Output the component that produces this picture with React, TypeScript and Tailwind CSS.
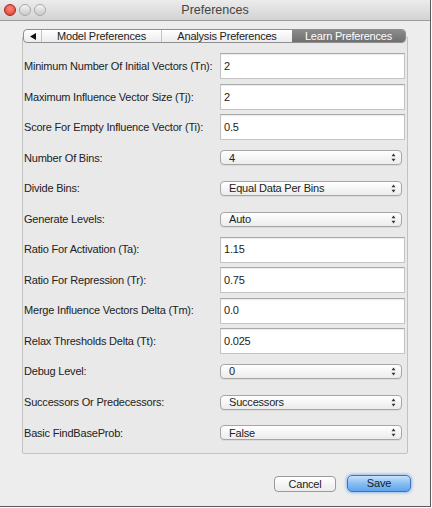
import React from 'react';

type Row = { label: string; kind: 'input' | 'select'; value: string };

const rows: Row[] = [
  { label: 'Minimum Number Of Initial Vectors (Tn):', kind: 'input', value: '2' },
  { label: 'Maximum Influence Vector Size (Tj):', kind: 'input', value: '2' },
  { label: 'Score For Empty Influence Vector (Ti):', kind: 'input', value: '0.5' },
  { label: 'Number Of Bins:', kind: 'select', value: '4' },
  { label: 'Divide Bins:', kind: 'select', value: 'Equal Data Per Bins' },
  { label: 'Generate Levels:', kind: 'select', value: 'Auto' },
  { label: 'Ratio For Activation (Ta):', kind: 'input', value: '1.15' },
  { label: 'Ratio For Repression (Tr):', kind: 'input', value: '0.75' },
  { label: 'Merge Influence Vectors Delta (Tm):', kind: 'input', value: '0.0' },
  { label: 'Relax Thresholds Delta (Tt):', kind: 'input', value: '0.025' },
  { label: 'Debug Level:', kind: 'select', value: '0' },
  { label: 'Successors Or Predecessors:', kind: 'select', value: 'Successors' },
  { label: 'Basic FindBaseProb:', kind: 'select', value: 'False' },
];

function UpDown() {
  return (
    <svg width="5" height="9" viewBox="0 0 5 9" className="shrink-0">
      <path d="M2.5 0.5 L4.5 3.2 L0.5 3.2 Z" fill="#333" />
      <path d="M2.5 8.5 L4.5 5.8 L0.5 5.8 Z" fill="#333" />
    </svg>
  );
}

function Light({ color, border }: { color: string; border: string }) {
  return (
    <div
      className="w-[12px] h-[12px] rounded-full border"
      style={{ background: color, borderColor: border }}
    />
  );
}

export default function App() {
  return (
    <div
      className="w-[432px] h-[508px] bg-white overflow-hidden text-[11px] tracking-[-0.2px] text-[#222]"
      style={{ fontFamily: '"Lucida Grande", "Liberation Sans", Arial, sans-serif' }}
    >
      <div className="w-[431px] h-[507px] bg-[#ededed] border-r border-b border-[#5a5a5a] flex flex-col">
        {/* title bar */}
        <div className="h-[21px] shrink-0 relative flex items-center bg-gradient-to-b from-[#ececec] to-[#d3d3d3] border-b border-[#9d9d9d]">
          <div className="flex items-center gap-[3px] pl-[4px]">
            <Light color="radial-gradient(circle at 50% 35%, #ff8a80, #d8362a)" border="#a3261d" />
            <Light color="linear-gradient(#f4f4f4, #c9c9c9)" border="#a8a8a8" />
            <Light color="linear-gradient(#f4f4f4, #c9c9c9)" border="#a8a8a8" />
          </div>
          <div className="absolute inset-0 flex items-center justify-center text-[12.5px] tracking-normal text-[#444]">
            Preferences
          </div>
        </div>

        {/* tabbed panel */}
        <div className="flex flex-col pl-[22px] pr-[22px] pt-[8px]">
          <div className="relative z-10 ml-[1px] mr-[2px] h-[14px] flex rounded-[4px] border border-[#8e8e8e] bg-gradient-to-b from-white to-[#ececec] overflow-hidden text-[11px] leading-none">
            <div className="w-[18px] flex items-center justify-center border-r border-[#c4c4c4]">
              <svg width="6" height="7" viewBox="0 0 6 7">
                <path d="M0 3.5 L6 0 L6 7 Z" fill="#111" />
              </svg>
            </div>
            <div className="w-[120px] flex items-center justify-center border-r border-[#c4c4c4] text-[#222]">
              Model Preferences
            </div>
            <div className="w-[130px] flex items-center justify-center text-[#222]">
              Analysis Preferences
            </div>
            <div className="flex-1 flex items-center justify-center bg-gradient-to-b from-[#8c8c8c] to-[#6f6f6f] text-white">
              Learn Preferences
            </div>
          </div>

          <div className="-mt-[7px] h-[418px] border border-[#c2c2c2] rounded-[2px] bg-[#e9e9e9] pt-[14px] pl-[1px] pr-[2px]">
            {rows.map((r) => (
              <div key={r.label} className="h-[30.55px] flex items-center">
                <div className="w-[196px] shrink-0 whitespace-nowrap">{r.label}</div>
                {r.kind === 'input' ? (
                  <div className="flex-1 h-[26px] bg-white border border-[#c4c4c4] border-t-[#a9a9a9] flex items-center pl-[3px] shadow-[inset_0_1px_1px_rgba(0,0,0,0.08)]">
                    {r.value}
                  </div>
                ) : (
                  <div className="flex-1 mr-[3px] h-[15px] rounded-[4px] border border-[#a6a6a6] bg-gradient-to-b from-white to-[#ececec] flex items-center justify-between pl-[8px] pr-[5px] shadow-[0_1px_0_rgba(0,0,0,0.06)]">
                    <span>{r.value}</span>
                    <UpDown />
                  </div>
                )}
              </div>
            ))}
          </div>
        </div>

        {/* buttons */}
        <div className="flex justify-end gap-[11px] pr-[19px] pt-[22px]">
          <button className="w-[62px] h-[16px] rounded-[4px] border border-[#9a9a9a] bg-gradient-to-b from-white to-[#ececec] flex items-center justify-center text-[11px] text-[#222]">
            Cancel
          </button>
          <button className="w-[64px] h-[17px] -mt-[1px] rounded-[5px] border border-[#3d72bd] bg-gradient-to-b from-[#c8e1fa] via-[#87bdf2] to-[#5ea5ee] flex items-center justify-center text-[11px] text-[#0f1e33] shadow-[0_0_3px_1px_rgba(90,150,230,0.6)]">
            Save
          </button>
        </div>
      </div>
    </div>
  );
}
